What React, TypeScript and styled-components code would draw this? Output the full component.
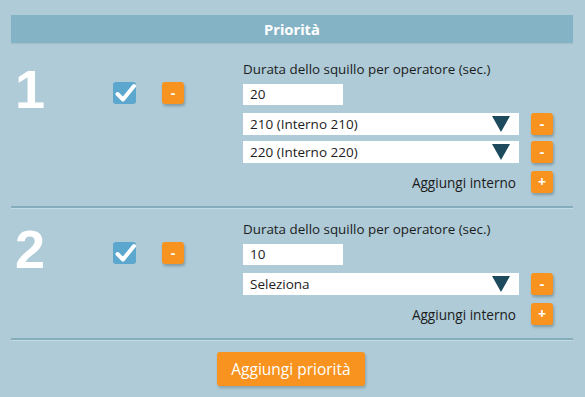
import React from "react";
import styled, { createGlobalStyle } from "styled-components";

const Global = createGlobalStyle`
  html, body { margin: 0; padding: 0; }
  body {
    background: #aecbd7;
    font-family: "Open Sans", "Noto Sans", sans-serif;
    color: #1c1c1c;
  }
`;

const Page = styled.div`
  width: 585px;
  height: 397px;
  box-sizing: border-box;
  padding: 15px 12px 0 11px;
  background: #aecbd7;
`;

const Header = styled.div`
  height: 28px;
  margin-bottom: 5px;
  background: #85b3c6;
  color: #fff;
  font-family: "Noto Sans", sans-serif;
  font-weight: 700;
  font-size: 14.8px;
  display: flex;
  align-items: center;
  justify-content: center;
  box-shadow: 0 1px 1px rgba(0,0,0,0.06);
`;

const Section = styled.div`
  display: grid;
  grid-template-columns: 98px 49px 81px 1fr;
  padding: 12px 0 13px 4px;
  border-bottom: 2px solid #86adbd;
  box-shadow: 0 1px 0 #c3dbe4;
`;

const Num = styled.div`
  font-family: "Liberation Sans", Arial, sans-serif;
  font-weight: 700;
  font-size: 54px;
  line-height: 1;
  color: #fff;
  padding-top: 2px;
`;

const Check = styled.div`
  margin-top: 22px;
  width: 23px;
  height: 22px;
  border-radius: 3px;
  background: #5ba7cd;
  position: relative;
`;

const CheckSvg = styled.svg`
  position: absolute;
  left: 2px;
  top: 1px;
`;

const OrangeBtn = styled.button`
  width: 22px;
  height: 22px;
  padding: 0;
  border: none;
  border-radius: 3px;
  background: #f7931e;
  color: #fff;
  font-family: "Open Sans", sans-serif;
  font-weight: 700;
  font-size: 14px;
  line-height: 1;
  display: flex;
  align-items: center;
  justify-content: center;
  box-shadow: 1px 2px 3px rgba(0,0,0,0.25);
  cursor: pointer;
`;

const BtnCell = styled.div`
  margin-top: 22px;
`;

const Form = styled.div`
  display: flex;
  flex-direction: column;
  width: 310px;
`;

const Label = styled.div`
  font-size: 13.4px;
  line-height: 18px;
  margin-bottom: 6px;
`;

const Input = styled.div`
  width: 100px;
  height: 21px;
  background: #fff;
  box-sizing: border-box;
  padding-left: 7px;
  font-size: 13.5px;
  line-height: 21px;
  margin-bottom: 8px;
`;

const SelectRow = styled.div`
  display: flex;
  align-items: center;
  gap: 12px;
  margin-bottom: 6px;
`;

const Select = styled.div`
  width: 277px;
  height: 22px;
  background: #fff;
  box-sizing: border-box;
  padding: 0 9px 0 7px;
  display: flex;
  align-items: center;
  justify-content: space-between;
  font-size: 13.5px;
`;

const AddRow = styled.div`
  display: flex;
  align-items: center;
  justify-content: flex-end;
  gap: 15px;
  margin-top: 2px;
  font-size: 13.6px;
`;

const Footer = styled.div`
  display: flex;
  justify-content: center;
  padding-top: 12px;
  padding-right: 2px;
`;

const BigBtn = styled.button`
  height: 34px;
  padding: 0 14px;
  border: none;
  border-radius: 3px;
  background: #f7931e;
  color: #fff;
  font-family: "Open Sans", sans-serif;
  font-size: 15.5px;
  box-shadow: 1px 2px 3px rgba(0,0,0,0.2);
`;

const Tri = () => (
  <svg width="18" height="16" viewBox="0 0 18 16">
    <polygon points="0,0 18,0 9,16" fill="#1d4a5c" />
  </svg>
);

const CheckBox = () => (
  <Check>
    <CheckSvg width="23" height="20" viewBox="0 0 23 20">
      <path d="M2.5 11 L8 16.5 L19 3" stroke="#fff" strokeWidth="4" fill="none" strokeLinecap="round" strokeLinejoin="round" />
    </CheckSvg>
  </Check>
);

type Prio = { n: number; dur: string; items: string[] };

const data: Prio[] = [
  { n: 1, dur: "20", items: ["210 (Interno 210)", "220 (Interno 220)"] },
  { n: 2, dur: "10", items: ["Seleziona"] },
];

export default function App() {
  return (
    <Page>
      <Global />
      <Header>Priorità</Header>
      {data.map((p) => (
        <Section key={p.n}>
          <Num>{p.n}</Num>
          <div><CheckBox /></div>
          <BtnCell><OrangeBtn>-</OrangeBtn></BtnCell>
          <Form>
            <Label>Durata dello squillo per operatore (sec.)</Label>
            <Input>{p.dur}</Input>
            {p.items.map((it) => (
              <SelectRow key={it}>
                <Select>
                  <span>{it}</span>
                  <Tri />
                </Select>
                <OrangeBtn>-</OrangeBtn>
              </SelectRow>
            ))}
            <AddRow>
              <span>Aggiungi interno</span>
              <OrangeBtn>+</OrangeBtn>
            </AddRow>
          </Form>
        </Section>
      ))}
      <Footer>
        <BigBtn>Aggiungi priorità</BigBtn>
      </Footer>
    </Page>
  );
}
